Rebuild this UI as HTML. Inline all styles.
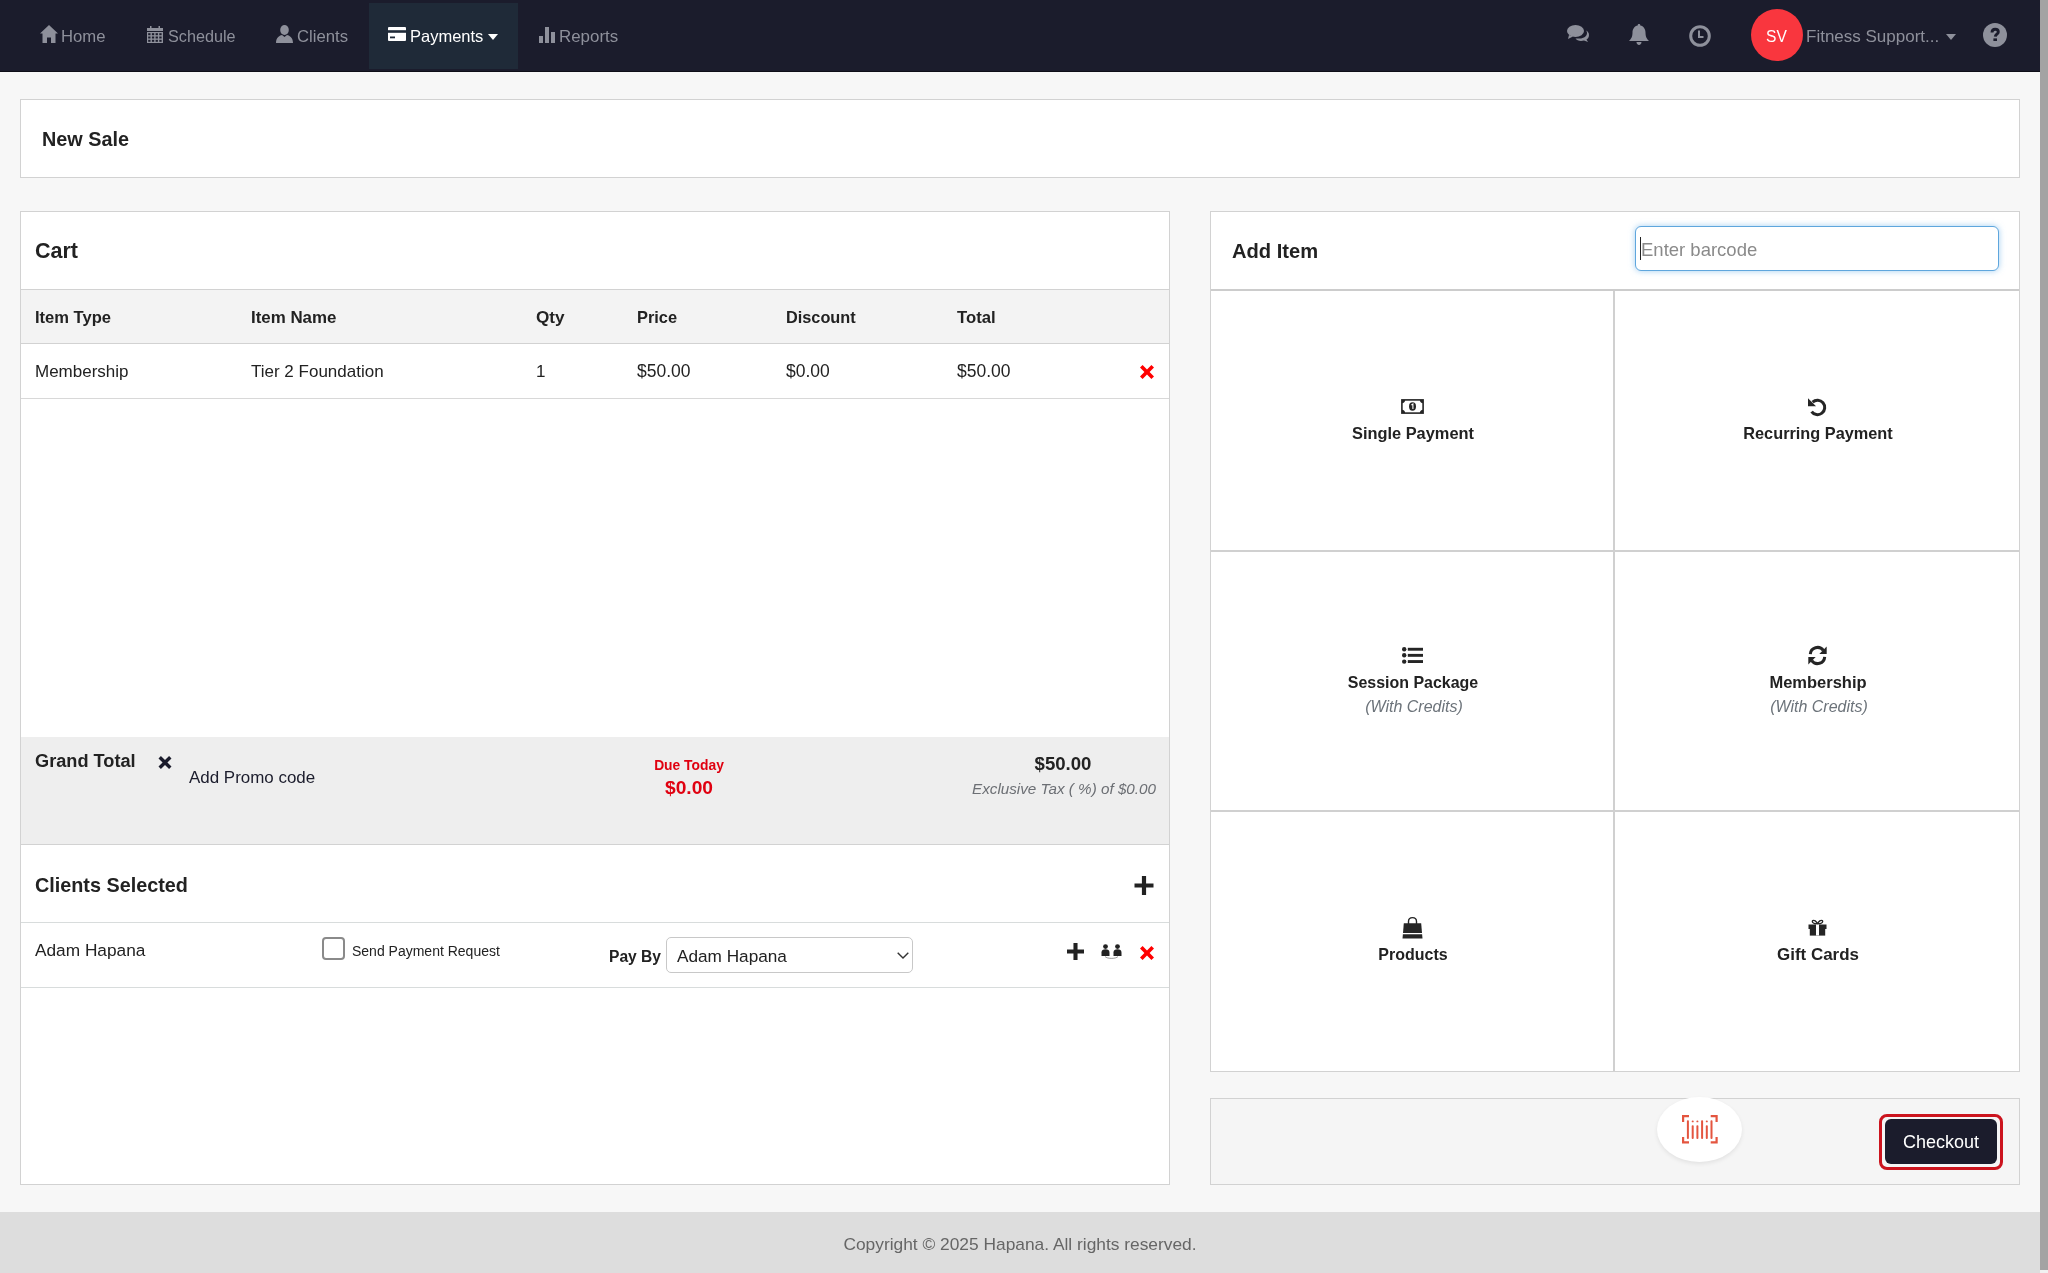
<!DOCTYPE html>
<html><head><meta charset="utf-8"><title>New Sale</title>
<style>
html,body{margin:0;padding:0;}
body{width:2048px;height:1273px;overflow:hidden;background:#f7f7f7;position:relative;font-family:"Liberation Sans",sans-serif;}
.a{position:absolute;box-sizing:content-box;}
.t{position:absolute;line-height:1;white-space:nowrap;will-change:transform;}
svg.a{overflow:visible;}
</style></head><body>
<div class="a" style="left:0px;top:0px;width:2040px;height:71px;background:#1b1c2c"></div>
<div class="a" style="left:0px;top:71px;width:2040px;height:1px;background:#0e0e18"></div>
<div class="a" style="left:369px;top:3px;width:149px;height:66px;background:#1f2a38"></div>
<svg class="a" style="left:40px;top:25px;" width="18" height="18" viewBox="0 0 18 18"><path d="M9 0 L18 8.5 L15.5 8.5 L15.5 18 L11 18 L11 12.5 L7 12.5 L7 18 L2.5 18 L2.5 8.5 L0 8.5 Z" fill="#8e909b"/></svg>
<span class="t" style="left:60.50px;top:27px;line-height:19px;font-size:16.70px;color:#8e909b;font-weight:normal;font-style:normal;">Home</span>
<svg class="a" style="left:147px;top:26px;" width="16" height="17" viewBox="0 0 16 17"><rect x="0" y="2" width="16" height="3" fill="#8e909b"/><rect x="3" y="0" width="1.5" height="3" fill="#8e909b"/><rect x="11.5" y="0" width="1.5" height="3" fill="#8e909b"/><rect x="0" y="6" width="16" height="11" fill="#8e909b"/><rect x="1.20" y="7.20" width="2.3" height="2" fill="#1b1c2c"/><rect x="1.20" y="10.50" width="2.3" height="2" fill="#1b1c2c"/><rect x="1.20" y="13.80" width="2.3" height="2" fill="#1b1c2c"/><rect x="4.90" y="7.20" width="2.3" height="2" fill="#1b1c2c"/><rect x="4.90" y="10.50" width="2.3" height="2" fill="#1b1c2c"/><rect x="4.90" y="13.80" width="2.3" height="2" fill="#1b1c2c"/><rect x="8.60" y="7.20" width="2.3" height="2" fill="#1b1c2c"/><rect x="8.60" y="10.50" width="2.3" height="2" fill="#1b1c2c"/><rect x="8.60" y="13.80" width="2.3" height="2" fill="#1b1c2c"/><rect x="12.30" y="7.20" width="2.3" height="2" fill="#1b1c2c"/><rect x="12.30" y="10.50" width="2.3" height="2" fill="#1b1c2c"/><rect x="12.30" y="13.80" width="2.3" height="2" fill="#1b1c2c"/></svg>
<span class="t" style="left:168.00px;top:27px;line-height:18px;font-size:16.20px;color:#8e909b;font-weight:normal;font-style:normal;">Schedule</span>
<svg class="a" style="left:276px;top:25px;" width="17" height="18" viewBox="0 0 17 18"><ellipse cx="8.5" cy="5" rx="4.3" ry="5" fill="#8e909b"/><path d="M0 18 C0 12 4 10.5 6 10 L8.5 12 L11 10 C13 10.5 17 12 17 18 Z" fill="#8e909b"/></svg>
<span class="t" style="left:297.00px;top:27px;line-height:19px;font-size:16.70px;color:#8e909b;font-weight:normal;font-style:normal;">Clients</span>
<svg class="a" style="left:388px;top:27px;" width="18" height="14" viewBox="0 0 18 14"><rect x="0" y="0" width="18" height="14" rx="1" fill="#fff"/><rect x="0" y="3.2" width="18" height="2.6" fill="#1f2a38"/><rect x="2" y="9.5" width="5" height="1.8" fill="#1f2a38"/></svg>
<span class="t" style="left:410.20px;top:27px;line-height:18px;font-size:16.50px;color:#fff;font-weight:normal;font-style:normal;">Payments</span>
<svg class="a" style="left:488px;top:34px;" width="10" height="6" viewBox="0 0 10 6"><path d="M0 0 L10 0 L5 6 Z" fill="#fff"/></svg>
<svg class="a" style="left:539px;top:27px;" width="16" height="16" viewBox="0 0 16 16"><rect x="0" y="9" width="4" height="7" fill="#8e909b"/><rect x="6" y="0" width="4" height="16" fill="#8e909b"/><rect x="12" y="5" width="4" height="11" fill="#8e909b"/></svg>
<span class="t" style="left:558.50px;top:27px;line-height:19px;font-size:16.90px;color:#8e909b;font-weight:normal;font-style:normal;">Reports</span>
<svg class="a" style="left:1567px;top:25px;" width="22" height="17" viewBox="0 0 22 17"><ellipse cx="8.5" cy="6" rx="8.5" ry="6" fill="#8e909b"/><path d="M2 10 L1 14 L6 11.5 Z" fill="#8e909b"/><path d="M12.5 13.5 C17 13.5 20 11 20 8 C20 7 19.5 6 19 5.5 C21 6.5 22 8 22 10 C22 12 21 13.5 19.5 14.5 L21 17 L17 15.5 C16 15.8 15 16 14 16 C11.5 16 9.5 15 8.5 13.5 Z" fill="#8e909b"/></svg>
<svg class="a" style="left:1629px;top:24px;" width="20" height="21" viewBox="0 0 20 21"><path d="M10 0 C11 0 11.3 0.6 11.3 1.4 C14.5 2 16.5 4.8 16.5 8.5 C16.5 13 18 15 20 17 L0 17 C2 15 3.5 13 3.5 8.5 C3.5 4.8 5.5 2 8.7 1.4 C8.7 0.6 9 0 10 0 Z" fill="#8e909b"/><path d="M7.5 18 L12.5 18 C12.5 19.6 11.4 21 10 21 C8.6 21 7.5 19.6 7.5 18 Z" fill="#8e909b"/></svg>
<svg class="a" style="left:1689px;top:25px;" width="22" height="22" viewBox="0 0 22 22"><circle cx="11" cy="11" r="9.3" fill="none" stroke="#8e909b" stroke-width="3"/><path d="M10 5.5 L10 12 L14.5 12" fill="none" stroke="#8e909b" stroke-width="2"/></svg>
<div class="a" style="left:1751px;top:9px;width:52px;height:52px;background:#f9363e;border-radius:50%"></div>
<span class="t" style="left:1766.40px;top:28px;line-height:17px;font-size:15.60px;color:#fff;font-weight:normal;font-style:normal;">SV</span>
<span class="t" style="left:1806.40px;top:27px;line-height:19px;font-size:17.00px;color:#8e909b;font-weight:normal;font-style:normal;">Fitness Support...</span>
<svg class="a" style="left:1946px;top:34px;" width="10" height="6" viewBox="0 0 10 6"><path d="M0 0 L10 0 L5 6 Z" fill="#8e909b"/></svg>
<svg class="a" style="left:1983px;top:23px;" width="24" height="24" viewBox="0 0 24 24"><circle cx="12" cy="12" r="12" fill="#8e909b"/><path d="M9 9.6 C9 7.3 10.4 6.3 12.2 6.3 C14 6.3 15.3 7.4 15.3 8.9 C15.3 11 12.4 11.3 12.3 13.6" fill="none" stroke="#1b1c2c" stroke-width="2.9"/><rect x="10.4" y="15.4" width="3.6" height="2.6" fill="#1b1c2c"/></svg>
<div class="a" style="left:20px;top:99px;width:1998px;height:77px;background:#fff;border:1px solid #d2d2d2"></div>
<span class="t" style="left:42.30px;top:128px;line-height:22px;font-size:19.82px;color:#222;font-weight:bold;font-style:normal;">New Sale</span>
<div class="a" style="left:20px;top:211px;width:1148px;height:972px;background:#fff;border:1px solid #d2d2d2"></div>
<span class="t" style="left:35.00px;top:239px;line-height:24px;font-size:21.50px;color:#222;font-weight:bold;font-style:normal;">Cart</span>
<div class="a" style="left:21px;top:289px;width:1148px;height:53px;background:#f3f3f3;border-top:1px solid #d2d2d2;border-bottom:1px solid #d2d2d2"></div>
<span class="t" style="left:35.20px;top:308px;line-height:19px;font-size:16.56px;color:#222;font-weight:bold;font-style:normal;">Item Type</span>
<span class="t" style="left:251.00px;top:308px;line-height:19px;font-size:16.90px;color:#222;font-weight:bold;font-style:normal;">Item Name</span>
<span class="t" style="left:536.00px;top:307px;line-height:20px;font-size:17.20px;color:#222;font-weight:bold;font-style:normal;">Qty</span>
<span class="t" style="left:637.30px;top:308px;line-height:18px;font-size:16.40px;color:#222;font-weight:bold;font-style:normal;">Price</span>
<span class="t" style="left:786.20px;top:308px;line-height:18px;font-size:16.30px;color:#222;font-weight:bold;font-style:normal;">Discount</span>
<span class="t" style="left:957.10px;top:308px;line-height:19px;font-size:16.70px;color:#222;font-weight:bold;font-style:normal;">Total</span>
<span class="t" style="left:35.20px;top:362px;line-height:19px;font-size:17.00px;color:#222;font-weight:normal;font-style:normal;">Membership</span>
<span class="t" style="left:251.40px;top:362px;line-height:19px;font-size:17.00px;color:#222;font-weight:normal;font-style:normal;">Tier 2 Foundation</span>
<span class="t" style="left:536.00px;top:362px;line-height:19px;font-size:17.00px;color:#222;font-weight:normal;font-style:normal;">1</span>
<span class="t" style="left:637.30px;top:361px;line-height:20px;font-size:17.50px;color:#222;font-weight:normal;font-style:normal;">$50.00</span>
<span class="t" style="left:786.20px;top:361px;line-height:20px;font-size:17.50px;color:#222;font-weight:normal;font-style:normal;">$0.00</span>
<span class="t" style="left:957.10px;top:361px;line-height:20px;font-size:17.50px;color:#222;font-weight:normal;font-style:normal;">$50.00</span>
<svg class="a" style="left:1140px;top:365px;" width="14" height="14" viewBox="0 0 14 14"><path d="M2.6 0 L7 4.4 L11.4 0 L14 2.6 L9.6 7 L14 11.4 L11.4 14 L7 9.6 L2.6 14 L0 11.4 L4.4 7 L0 2.6 Z" fill="#ff0000"/></svg>
<div class="a" style="left:21px;top:398px;width:1148px;height:1px;background:#d8d8d8"></div>
<div class="a" style="left:21px;top:737px;width:1148px;height:107px;background:#eeeeee"></div>
<div class="a" style="left:21px;top:844px;width:1148px;height:1px;background:#d2d2d2"></div>
<span class="t" style="left:35.00px;top:751px;line-height:20px;font-size:18.18px;color:#222;font-weight:bold;font-style:normal;">Grand Total</span>
<svg class="a" style="left:157.5px;top:756px;" width="14" height="13" viewBox="0 0 14 14"><path d="M2.6 0 L7 4.4 L11.4 0 L14 2.6 L9.6 7 L14 11.4 L11.4 14 L7 9.6 L2.6 14 L0 11.4 L4.4 7 L0 2.6 Z" fill="#1b1c2c"/></svg>
<span class="t" style="left:188.80px;top:768px;line-height:19px;font-size:16.94px;color:#1b1c2c;font-weight:normal;font-style:normal;">Add Promo code</span>
<span class="t" style="left:188.60px;width:1000px;text-align:center;top:757px;line-height:16px;font-size:13.85px;color:#e00010;font-weight:bold;font-style:normal;">Due Today</span>
<span class="t" style="left:188.60px;width:1000px;text-align:center;top:777px;line-height:21px;font-size:19.20px;color:#e00010;font-weight:bold;font-style:normal;">$0.00</span>
<span class="t" style="left:563.30px;width:1000px;text-align:center;top:753px;line-height:21px;font-size:18.60px;color:#222;font-weight:bold;font-style:normal;">$50.00</span>
<span class="t" style="left:563.85px;width:1000px;text-align:center;top:780px;line-height:17px;font-size:15.24px;color:#6c6f74;font-weight:normal;font-style:italic;">Exclusive Tax ( %) of $0.00</span>
<span class="t" style="left:35.30px;top:874px;line-height:22px;font-size:19.80px;color:#222;font-weight:bold;font-style:normal;">Clients Selected</span>
<svg class="a" style="left:1134px;top:876px;" width="20" height="19" viewBox="0 0 20 20"><path d="M7.8 0 L12.2 0 L12.2 7.8 L20 7.8 L20 12.2 L12.2 12.2 L12.2 20 L7.8 20 L7.8 12.2 L0 12.2 L0 7.8 L7.8 7.8 Z" fill="#222"/></svg>
<div class="a" style="left:21px;top:922px;width:1148px;height:1px;background:#d8dcdc"></div>
<span class="t" style="left:35.30px;top:940px;line-height:20px;font-size:17.28px;color:#222;font-weight:normal;font-style:normal;">Adam Hapana</span>
<div class="a" style="left:322px;top:937px;width:19px;height:19px;background:#fff;border:2px solid #8a8a8a;border-radius:4px"></div>
<span class="t" style="left:352.10px;top:943px;line-height:16px;font-size:14.00px;color:#222;font-weight:normal;font-style:normal;">Send Payment Request</span>
<span class="t" style="left:609.00px;top:948px;line-height:17px;font-size:15.60px;color:#222;font-weight:bold;font-style:normal;">Pay By</span>
<div class="a" style="left:666px;top:937px;width:245px;height:34px;background:#fff;border:1px solid #c8c8c8;border-radius:5px"></div>
<span class="t" style="left:676.60px;top:946px;line-height:20px;font-size:17.20px;color:#222;font-weight:normal;font-style:normal;">Adam Hapana</span>
<svg class="a" style="left:897px;top:952px;" width="12" height="7" viewBox="0 0 12 7"><path d="M0.7 0.7 L6 6 L11.3 0.7" fill="none" stroke="#333" stroke-width="1.4"/></svg>
<svg class="a" style="left:1067px;top:943px;" width="17" height="17" viewBox="0 0 20 20"><path d="M7.6 0 L12.4 0 L12.4 7.6 L20 7.6 L20 12.4 L12.4 12.4 L12.4 20 L7.6 20 L7.6 12.4 L0 12.4 L0 7.6 L7.6 7.6 Z" fill="#222"/></svg>
<svg class="a" style="left:1101px;top:944px;" width="21" height="15" viewBox="0 0 21 15"><circle cx="4.5" cy="2.6" r="2.4" fill="#222"/><circle cx="16.5" cy="2.6" r="2.4" fill="#222"/><path d="M0.5 12 L0.5 8.5 C0.5 6.5 2 5.3 4.5 5.3 C7 5.3 8.5 6.5 8.5 8.5 L8.5 12 Z" fill="#222"/><path d="M12.5 12 L12.5 8.5 C12.5 6.5 14 5.3 16.5 5.3 C19 5.3 20.5 6.5 20.5 8.5 L20.5 12 Z" fill="#222"/><path d="M4 12.5 C6 15 15 15 17 12.5" fill="none" stroke="#555" stroke-width="0.6"/></svg>
<svg class="a" style="left:1140px;top:946px;" width="14" height="14" viewBox="0 0 14 14"><path d="M2.6 0 L7 4.4 L11.4 0 L14 2.6 L9.6 7 L14 11.4 L11.4 14 L7 9.6 L2.6 14 L0 11.4 L4.4 7 L0 2.6 Z" fill="#ff0000"/></svg>
<div class="a" style="left:21px;top:987px;width:1148px;height:1px;background:#d8dcdc"></div>
<div class="a" style="left:1210px;top:211px;width:808px;height:859px;background:#fff;border:1px solid #d2d2d2"></div>
<span class="t" style="left:1231.70px;top:240px;line-height:22px;font-size:20.14px;color:#222;font-weight:bold;font-style:normal;">Add Item</span>
<div class="a" style="left:1635px;top:226px;width:362px;height:43px;background:#fff;border:1px solid #5fa6dd;border-radius:6px;box-shadow:0 0 6px rgba(102,175,233,0.6)"></div>
<div class="a" style="left:1640px;top:237px;width:1px;height:23px;background:#222"></div>
<span class="t" style="left:1640.60px;top:239px;line-height:21px;font-size:18.50px;color:#8a8a8a;font-weight:normal;font-style:normal;">Enter barcode</span>
<div class="a" style="left:1211px;top:289px;width:808px;height:2px;background:#cccccc"></div>
<div class="a" style="left:1613px;top:291px;width:2px;height:780px;background:#d0d0d0"></div>
<div class="a" style="left:1211px;top:550px;width:808px;height:2px;background:#d0d0d0"></div>
<div class="a" style="left:1211px;top:810px;width:808px;height:2px;background:#d0d0d0"></div>
<svg class="a" style="left:1401px;top:399px;" width="23" height="15" viewBox="0 0 23 15"><rect x="0.9" y="0.9" width="21.2" height="13.2" fill="none" stroke="#252525" stroke-width="1.6"/><path d="M1 1 L4.2 1 C4.2 2.8 2.8 4.2 1 4.2 Z M22 1 L18.8 1 C18.8 2.8 20.2 4.2 22 4.2 Z M1 14 L4.2 14 C4.2 12.2 2.8 10.8 1 10.8 Z M22 14 L18.8 14 C18.8 12.2 20.2 10.8 22 10.8 Z" fill="#252525"/><ellipse cx="11.5" cy="7.5" rx="3.5" ry="4.2" fill="#252525"/><path d="M10.4 6 L11.9 5 L11.9 10" stroke="#fff" stroke-width="1.1" fill="none"/></svg>
<span class="t" style="left:912.50px;width:1000px;text-align:center;top:424px;line-height:18px;font-size:16.39px;color:#222;font-weight:bold;font-style:normal;">Single Payment</span>
<svg class="a" style="left:1808px;top:398px;" width="19" height="18" viewBox="0 0 19 18"><path d="M4.6 4.2 A7.2 7.2 0 1 1 3.6 13.6" fill="none" stroke="#252525" stroke-width="3"/><path d="M0 0.3 L0 8.3 L8 8.3 Z" fill="#252525"/></svg>
<span class="t" style="left:1317.50px;width:1000px;text-align:center;top:424px;line-height:18px;font-size:16.31px;color:#222;font-weight:bold;font-style:normal;">Recurring Payment</span>
<svg class="a" style="left:1402px;top:647px;" width="21" height="17" viewBox="0 0 21 17"><circle cx="2.2" cy="2.2" r="2.2" fill="#252525"/><circle cx="2.2" cy="8.3" r="2.2" fill="#252525"/><circle cx="2.2" cy="14.6" r="2.2" fill="#252525"/><rect x="5.8" y="0.8" width="15.2" height="2.9" fill="#252525"/><rect x="5.8" y="6.9" width="15.2" height="2.9" fill="#252525"/><rect x="5.8" y="13.1" width="15.2" height="2.9" fill="#252525"/></svg>
<span class="t" style="left:912.50px;width:1000px;text-align:center;top:674px;line-height:17px;font-size:15.96px;color:#222;font-weight:bold;font-style:normal;">Session Package</span>
<span class="t" style="left:913.60px;width:1000px;text-align:center;top:698px;line-height:17px;font-size:16.00px;color:#6c737a;font-weight:normal;font-style:italic;">(With Credits)</span>
<svg class="a" style="left:1808px;top:646px;" width="19" height="19" viewBox="0 0 19 19"><path d="M2.3 8.2 A7.2 7.2 0 0 1 15.3 4.4" fill="none" stroke="#252525" stroke-width="3"/><path d="M18.7 0.6 L18.7 8 L11.3 8 Z" fill="#252525"/><path d="M16.7 10.8 A7.2 7.2 0 0 1 3.7 14.6" fill="none" stroke="#252525" stroke-width="3"/><path d="M0.3 18.4 L0.3 11 L7.7 11 Z" fill="#252525"/></svg>
<span class="t" style="left:1317.50px;width:1000px;text-align:center;top:673px;line-height:18px;font-size:16.50px;color:#222;font-weight:bold;font-style:normal;">Membership</span>
<span class="t" style="left:1318.70px;width:1000px;text-align:center;top:698px;line-height:17px;font-size:16.00px;color:#6c737a;font-weight:normal;font-style:italic;">(With Credits)</span>
<svg class="a" style="left:1402px;top:917px;" width="21" height="22" viewBox="0 0 21 22"><path d="M6.5 7 L6.5 4.5 C6.5 2 8.3 0.6 10.5 0.6 C12.7 0.6 14.5 2 14.5 4.5 L14.5 7" fill="none" stroke="#252525" stroke-width="1.4"/><path d="M1.8 6.3 L19.2 6.3 L20 16 L1 16 Z" fill="#252525"/><path d="M0.9 17.3 L20.1 17.3 L20.5 21.5 L0.5 21.5 Z" fill="#252525"/></svg>
<span class="t" style="left:912.50px;width:1000px;text-align:center;top:946px;line-height:17px;font-size:15.99px;color:#222;font-weight:bold;font-style:normal;">Products</span>
<svg class="a" style="left:1808px;top:919px;" width="19" height="17" viewBox="0 0 19 17"><path d="M9.5 5 C8.5 2 6 0.8 4.8 1.6 C3.6 2.5 4.5 5 9.5 5 C14.5 5 15.4 2.5 14.2 1.6 C13 0.8 10.5 2 9.5 5 Z" fill="none" stroke="#252525" stroke-width="1.3"/><rect x="0.5" y="5.5" width="18" height="4.5" fill="#252525"/><rect x="1.8" y="10" width="15.4" height="6.6" fill="#252525"/><rect x="8" y="5.5" width="3" height="11" fill="#fff"/></svg>
<span class="t" style="left:1317.50px;width:1000px;text-align:center;top:945px;line-height:19px;font-size:16.96px;color:#222;font-weight:bold;font-style:normal;">Gift Cards</span>
<div class="a" style="left:1210px;top:1098px;width:808px;height:85px;background:#f5f5f5;border:1px solid #d2d2d2"></div>
<div class="a" style="left:1657px;top:1097px;width:85px;height:65px;background:#fff;border-radius:50%;box-shadow:0 2px 4px rgba(0,0,0,0.08)"></div>
<svg class="a" style="left:1682px;top:1115px;" width="36" height="29" viewBox="0 0 36 29"><path d="M1.1 7 L1.1 1.1 L7 1.1 M34.6 7 L34.6 1.1 L28.7 1.1 M1.1 22 L1.1 27.4 L7 27.4 M34.6 22 L34.6 27.4 L28.7 27.4" fill="none" stroke="#e4553f" stroke-width="2.2"/><rect x="4.9" y="5.2" width="2" height="18.8" rx="0.9" fill="#e4553f"/><rect x="9.7" y="5.4" width="2" height="1.9" rx="0.9" fill="#e4553f"/><rect x="9.7" y="10.2" width="2" height="13.8" rx="0.9" fill="#e4553f"/><rect x="14.4" y="5.4" width="2" height="1.9" rx="0.9" fill="#e4553f"/><rect x="14.4" y="10.2" width="2" height="13.8" rx="0.9" fill="#e4553f"/><rect x="19.1" y="5.2" width="2" height="18.8" rx="0.9" fill="#e4553f"/><rect x="23.8" y="5.4" width="2" height="1.9" rx="0.9" fill="#e4553f"/><rect x="23.8" y="10.2" width="2" height="13.8" rx="0.9" fill="#e4553f"/><rect x="28.5" y="5.2" width="2" height="18.8" rx="0.9" fill="#e4553f"/></svg>
<div class="a" style="left:1879px;top:1114px;width:118px;height:50px;border:3px solid #cc141e;border-radius:8px"></div>
<div class="a" style="left:1885px;top:1119px;width:112px;height:45px;background:#1b1c2c;border-radius:6px"></div>
<span class="t" style="left:1441.40px;width:1000px;text-align:center;top:1132px;line-height:20px;font-size:18.00px;color:#fff;font-weight:normal;font-style:normal;">Checkout</span>
<div class="a" style="left:0px;top:1212px;width:2040px;height:61px;background:#dddddd"></div>
<span class="t" style="left:519.75px;width:1000px;text-align:center;top:1234px;line-height:20px;font-size:17.35px;color:#666;font-weight:normal;font-style:normal;">Copyright © 2025 Hapana. All rights reserved.</span>
<div class="a" style="left:2040px;top:0px;width:8px;height:1273px;background:#f1f1f1"></div>
<div class="a" style="left:2040px;top:0px;width:8px;height:1270px;background:#a3a3a3"></div>
</body></html>
